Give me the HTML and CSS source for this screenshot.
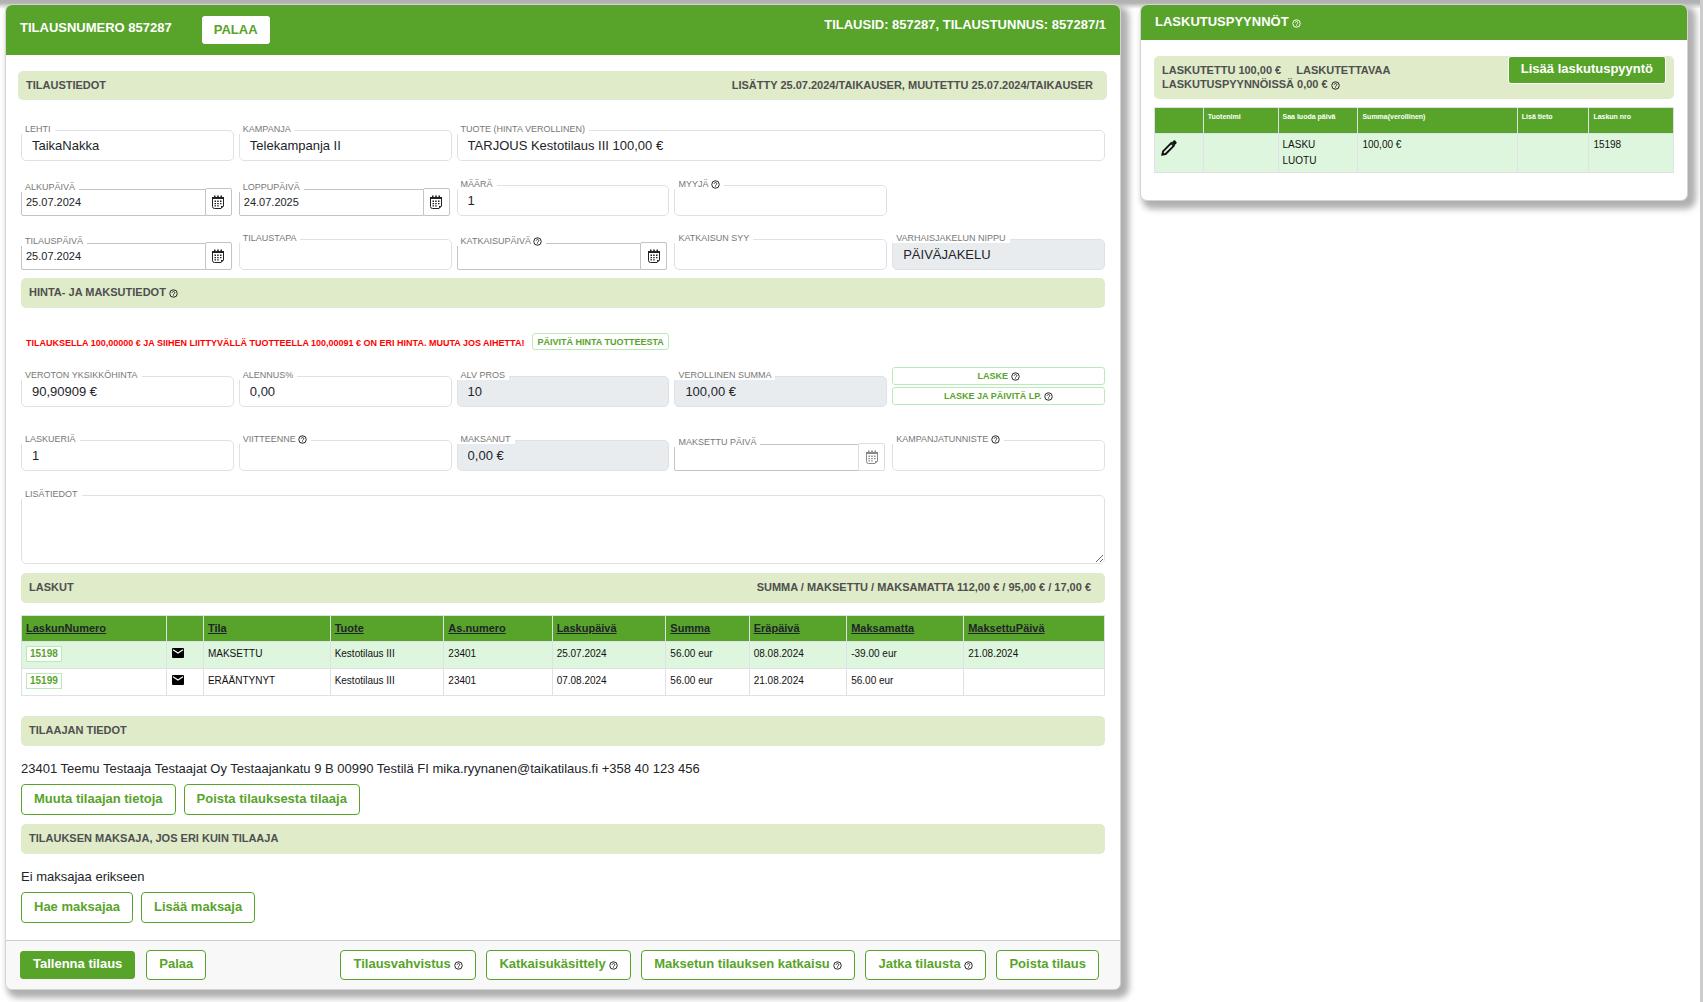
FILE: index.html
```html
<!DOCTYPE html>
<html lang="fi">
<head>
<meta charset="utf-8">
<title>Tilaus 857287</title>
<link rel="stylesheet" href="styles.css">
</head>
<body>
<svg class="sprite" aria-hidden="true">
  <symbol id="i-help" viewBox="0 0 24 24"><circle cx="12" cy="12" r="10" fill="none" stroke="currentColor" stroke-width="2.6"/><path d="M8.6 10a3.4 3.4 0 1 1 5.4 2.6c-1.300.9-2 1.500-2 2.800M12 17v2" fill="none" stroke="currentColor" stroke-width="2.400"/></symbol>
  <symbol id="i-cal" viewBox="0 0 12 14"><path d="M.5 3v8.500a2 2 0 0 0 2 2H9l2.500-2.500V3z" fill="none" stroke="currentColor"/><path d="M0 2h12v2H0zM2 .5h1.500V2H2zM5.200.5h1.600V2H5.200zM8.500.5H10V2H8.500z" fill="currentColor"/><path d="M2.500 5.500H4V7H2.500zM5.200 5.500h1.500V7H5.200zM8 5.500h1.500V7H8zM2.500 8H4v1.200H2.500zM5.200 8h1.500v1.200H5.200zM8 8h1.500v1.200H8zM2.500 10.300H4v1.200H2.500zM5.200 10.300h1.500v1.200H5.200zM9 13.500V11h2.500z" fill="currentColor"/></symbol>
  <symbol id="i-mail" viewBox="0 0 12 10"><path d="M1 0h10a1 1 0 0 1 1 1v8a1 1 0 0 1-1 1H1a1 1 0 0 1-1-1V1a1 1 0 0 1 1-1z" fill="#000"/><path d="M1 1.800 6 5l5-3.200" fill="none" stroke="#fff" stroke-width="1.200"/></symbol>
  <symbol id="i-pen" viewBox="0 0 16 16"><path d="M1.400 14.600 2 11.400l8.200-8.200 2.600 2.600-8.200 8.200z" fill="none" stroke="currentColor" stroke-width="1.900"/><path d="m10.800 2.400 1.800-1.800q.8-.6 1.500 0l1.300 1.300q.6.700 0 1.500l-1.800 1.800zM.6 15.400l.8-3.400L4 14.600z" fill="currentColor"/></symbol>
</svg>
<div class="page">
  <main class="panel">
    <header class="head head-main">
      <h1>TILAUSNUMERO <strong>857287</strong></h1>
      <button class="btn-head" type="button">PALAA</button>
      <span class="ids">TILAUSID: 857287, TILAUSTUNNUS: 857287/1</span>
    </header>
    <div class="intro">
      <div class="bar"><h2>TILAUSTIEDOT</h2><span>LISÄTTY 25.07.2024/TAIKAUSER, MUUTETTU 25.07.2024/TAIKAUSER</span></div>
    </div>
    <form class="body">
      <div class="grid row-first">
        <div class="field"><label for="lehti">LEHTI</label><input id="lehti" value="TaikaNakka"></div>
        <div class="field"><label for="kampanja">KAMPANJA</label><input id="kampanja" value="Telekampanja II"></div>
        <div class="field wide"><label for="tuote">TUOTE (HINTA VEROLLINEN)</label><input id="tuote" value="TARJOUS Kestotilaus III 100,00 €"></div>
      </div>
      <div class="grid row-second">
        <div class="field date"><label for="alku">ALKUPÄIVÄ</label><input id="alku" value="25.07.2024"><button type="button" aria-label="Kalenteri"><svg><use href="#i-cal"/></svg></button></div>
        <div class="field date"><label for="loppu">LOPPUPÄIVÄ</label><input id="loppu" value="24.07.2025"><button type="button" aria-label="Kalenteri"><svg><use href="#i-cal"/></svg></button></div>
        <div class="field"><label for="maara">MÄÄRÄ</label><input id="maara" value="1"></div>
        <div class="field"><label for="myyja">MYYJÄ <svg class="help"><use href="#i-help"/></svg></label><input id="myyja"></div>
      </div>
      <div class="grid row-third">
        <div class="field date"><label for="tilauspv">TILAUSPÄIVÄ</label><input id="tilauspv" value="25.07.2024"><button type="button" aria-label="Kalenteri"><svg><use href="#i-cal"/></svg></button></div>
        <div class="field"><label for="tapa">TILAUSTAPA</label><input id="tapa"></div>
        <div class="field date"><label for="katkpv">KATKAISUPÄIVÄ <svg class="help"><use href="#i-help"/></svg></label><input id="katkpv"><button type="button" aria-label="Kalenteri"><svg><use href="#i-cal"/></svg></button></div>
        <div class="field"><label for="syy">KATKAISUN SYY</label><input id="syy"></div>
        <div class="field"><label for="nippu">VARHAISJAKELUN NIPPU</label><input id="nippu" value="PÄIVÄJAKELU" readonly></div>
      </div>
      <div class="bar bar-price"><h2>HINTA- JA MAKSUTIEDOT <svg class="help"><use href="#i-help"/></svg></h2></div>
      <div class="warning"><span>TILAUKSELLA 100,00000 € JA SIIHEN LIITTYVÄLLÄ TUOTTEELLA 100,00091 € ON ERI HINTA. MUUTA JOS AIHETTA!</span><button class="btn-mini" type="button">PÄIVITÄ HINTA TUOTTEESTA</button></div>
      <div class="grid row-price">
        <div class="field"><label for="hinta">VEROTON YKSIKKÖHINTA</label><input id="hinta" value="90,90909 €"></div>
        <div class="field"><label for="ale">ALENNUS%</label><input id="ale" value="0,00"></div>
        <div class="field"><label for="alv">ALV PROS</label><input id="alv" value="10" readonly></div>
        <div class="field"><label for="summa">VEROLLINEN SUMMA</label><input id="summa" value="100,00 €" readonly></div>
        <div class="calc"><button class="btn-mini" type="button">LASKE <svg class="help"><use href="#i-help"/></svg></button><button class="btn-mini" type="button">LASKE JA PÄIVITÄ LP. <svg class="help"><use href="#i-help"/></svg></button></div>
      </div>
      <div class="grid row-pay">
        <div class="field"><label for="erat">LASKUERIÄ</label><input id="erat" value="1"></div>
        <div class="field"><label for="viite">VIITTEENNE <svg class="help"><use href="#i-help"/></svg></label><input id="viite"></div>
        <div class="field"><label for="maksanut">MAKSANUT</label><input id="maksanut" value="0,00 €" readonly></div>
        <div class="field date"><label for="makspv">MAKSETTU PÄIVÄ</label><input id="makspv"><button type="button" aria-label="Kalenteri" disabled><svg><use href="#i-cal"/></svg></button></div>
        <div class="field"><label for="tunniste">KAMPANJATUNNISTE <svg class="help"><use href="#i-help"/></svg></label><input id="tunniste"></div>
      </div>
      <div class="field notes"><label for="lisa">LISÄTIEDOT</label><textarea id="lisa"></textarea></div>

      <div class="bar"><h2>LASKUT</h2><span>SUMMA / MAKSETTU / MAKSAMATTA 112,00 € / 95,00 € / 17,00 €</span></div>
      <table class="invoices">
        <colgroup><col class="c-no"><col class="c-mail"><col class="c-state"><col class="c-prod"><col class="c-cust"><col class="c-date"><col class="c-sum"><col class="c-due"><col class="c-open"><col class="c-paid"></colgroup>
        <thead><tr><th><a href="#">LaskunNumero</a></th><th></th><th><a href="#">Tila</a></th><th><a href="#">Tuote</a></th><th><a href="#">As.numero</a></th><th><a href="#">Laskupäivä</a></th><th><a href="#">Summa</a></th><th><a href="#">Eräpäivä</a></th><th><a href="#">Maksamatta</a></th><th><a href="#">MaksettuPäivä</a></th></tr></thead>
        <tbody>
          <tr><td><a class="number" href="#">15198</a></td><td><svg class="mail"><use href="#i-mail"/></svg></td><td>MAKSETTU</td><td>Kestotilaus III</td><td>23401</td><td>25.07.2024</td><td>56.00 eur</td><td>08.08.2024</td><td>-39.00 eur</td><td>21.08.2024</td></tr>
          <tr><td><a class="number" href="#">15199</a></td><td><svg class="mail"><use href="#i-mail"/></svg></td><td>ERÄÄNTYNYT</td><td>Kestotilaus III</td><td>23401</td><td>07.08.2024</td><td>56.00 eur</td><td>21.08.2024</td><td>56.00 eur</td><td></td></tr>
        </tbody>
      </table>

      <div class="bar"><h2>TILAAJAN TIEDOT</h2></div>
      <p>23401 Teemu Testaaja Testaajat Oy Testaajankatu 9 B 00990 Testilä FI mika.ryynanen@taikatilaus.fi +358 40 123 456</p>
      <div class="actions"><button class="btn" type="button">Muuta tilaajan tietoja</button><button class="btn" type="button">Poista tilauksesta tilaaja</button></div>
      <div class="bar bar-payer"><h2>TILAUKSEN MAKSAJA, JOS ERI KUIN TILAAJA</h2></div>
      <p>Ei maksajaa erikseen</p>
      <div class="actions"><button class="btn" type="button">Hae maksajaa</button><button class="btn" type="button">Lisää maksaja</button></div>
    </form>
    <footer class="foot">
      <button class="btn btn-solid" type="button">Tallenna tilaus</button>
      <button class="btn" type="button">Palaa</button>
      <div class="foot-right">
        <button class="btn" type="button">Tilausvahvistus <svg class="help"><use href="#i-help"/></svg></button>
        <button class="btn" type="button">Katkaisukäsittely <svg class="help"><use href="#i-help"/></svg></button>
        <button class="btn" type="button">Maksetun tilauksen katkaisu <svg class="help"><use href="#i-help"/></svg></button>
        <button class="btn" type="button">Jatka tilausta <svg class="help"><use href="#i-help"/></svg></button>
        <button class="btn" type="button">Poista tilaus</button>
      </div>
    </footer>
  </main>

  <aside class="panel">
    <header class="head"><h1>LASKUTUSPYYNNÖT <svg class="help"><use href="#i-help"/></svg></h1></header>
    <div class="side-body">
      <div class="bar bar-side"><p>LASKUTETTU 100,00 € <span class="due">LASKUTETTAVAA</span> LASKUTUSPYYNNÖISSÄ 0,00 € <svg class="help"><use href="#i-help"/></svg></p><button class="btn btn-solid" type="button">Lisää laskutuspyyntö</button></div>
      <table class="requests">
        <colgroup><col class="r-edit"><col class="r-name"><col class="r-when"><col class="r-sum"><col class="r-info"><col class="r-no"></colgroup>
        <thead><tr><th></th><th>Tuotenimi</th><th>Saa luoda päivä</th><th>Summa(verollinen)</th><th>Lisä tieto</th><th>Laskun nro</th></tr></thead>
        <tbody><tr><td><svg class="pen"><use href="#i-pen"/></svg></td><td></td><td>LASKU<br>LUOTU</td><td>100,00 €</td><td></td><td>15198</td></tr></tbody>
      </table>
    </div>
  </aside>
</div>
</body>
</html>
```
FILE: styles.css
```css
* { box-sizing: border-box; }
body {
  margin: 0;
  font: 13px/20px "Liberation Sans", Arial, sans-serif;
  color: #212529;
  background: #fff;
}
.sprite { position: absolute; width: 0; height: 0; }
h1, h2, p { margin: 0; }
button, input, textarea { font: inherit; color: inherit; }
.help { width: 9px; height: 9px; vertical-align: -2px; color: #222; }

.page {
  display: grid;
  grid-template-columns: 1114fr 546fr;
  gap: 21px;
  align-items: start;
  min-height: 100vh;
  padding: 5px 13px 14px 6px;
  border-right: 3px solid #ccc;
  background: linear-gradient(#b0b0b0, #b4b4b4 3px, #fff 9px);
  overflow: hidden;
}
.panel {
  background: #fff;
  border-radius: 6px;
  box-shadow: 0 0 0 1px #d4d4d4, 5px 5px 6px 4px #b0b0b0;
  overflow: hidden;
}

.head {
  display: flex;
  align-items: flex-start;
  padding: 7px 14px 8px;
  background: #58a42b;
  color: #fff;
}
.head h1 { font-size: 13px; line-height: 20px; font-weight: 700; }
.head .help { color: #fff; }
.head-main { padding: 11px 14px; }
.head-main h1 { padding-top: 2px; margin-right: 30px; }
.ids { margin-left: auto; line-height: 18px; font-weight: 700; }
.btn-head {
  height: 28px;
  padding: 0 12px;
  border: 0;
  border-radius: 3px;
  background: #fff;
  color: #58a42b;
  font-weight: 700;
}

.bar {
  display: flex;
  justify-content: space-between;
  min-height: 30px;
  padding: 5px 14px 5px 8px;
  border-radius: 5px;
  background: #dfebc9;
  color: #4f4f4f;
  font-size: 11px;
  line-height: 18px;
  font-weight: 700;
}
.bar h2 { font: inherit; }
.intro { padding: 16px 13px 0 12px; }
.intro .bar { min-height: 29px; }

.body { padding: 30px 15px 17px; }
.grid {
  display: grid;
  grid-template-columns: repeat(5, 1fr);
  gap: 5px;
  align-items: end;
}
.wide { grid-column: span 3; }
.row-second { margin-top: 24px; }
.row-third { margin-top: 23px; }
.field { position: relative; display: flex; }
.field label {
  position: absolute;
  left: 0;
  top: -6px;
  padding: 0 4px;
  background: #fff;
  color: #777;
  font-size: 9px;
  line-height: 10px;
}
.field input, .field textarea {
  width: 100%;
  min-width: 0;
  height: 31px;
  padding: 0 10px 1px;
  border: 1px solid #dee2e6;
  border-radius: 5px;
  background: #fff;
}
.field input[readonly] { background: #e9ecef; }
.field textarea { display: block; height: 69px; padding: 8px 10px; }
.date { padding-right: 2px; align-items: flex-end; }
.date input {
  height: 27px;
  padding: 0 4px 1px;
  border-color: #c4c4c4;
  border-radius: 2px 0 0 2px;
  font-size: 11px;
}
.date button {
  display: grid;
  place-items: center;
  flex: 0 0 27px;
  height: 28px;
  margin-left: -1px;
  padding: 0;
  border: 1px solid #c4c4c4;
  border-radius: 2px;
  background: #fff;
  color: #222;
}
.date button:disabled { color: #888; border-color: #ddd; }
.date button svg { width: 12px; height: 14px; }

.bar-price { margin-top: 8px; }
.warning {
  display: flex;
  align-items: flex-start;
  gap: 8px;
  margin: 25px 0 16px 5px;
  color: #f00;
  font-size: 9px;
  line-height: 16px;
  font-weight: 700;
}
.warning span { padding-top: 2px; }
.btn-mini {
  padding: 0 4px;
  height: 17px;
  border: 1px solid #b9ebb9;
  border-radius: 3px;
  background: #fff;
  color: #58a42b;
  font-size: 9px;
  line-height: 14px;
  font-weight: 700;
}
.calc { display: grid; gap: 2px; padding-bottom: 2px; }
.calc .btn-mini { height: 18px; }
.row-pay { margin-top: 33px; }
.notes { margin: 24px 0 9px; }

table { width: 100%; table-layout: fixed; border-collapse: collapse; color: #111; }
th, td { border: 1px solid #dee2e6; text-align: left; vertical-align: top; }
th { background: #58a42b; }
.invoices { margin: 12px 0 20px; font-size: 10px; line-height: 16px; }
.invoices th { height: 26px; padding: 4px; font-size: 11px; }
.invoices th a { color: #212529; }
.invoices td { height: 27px; padding: 4px; }
tbody tr:nth-child(odd) { background: #ddf6dd; }
.c-no { width: 13.400%; } .c-mail { width: 3.400%; } .c-state { width: 11.700%; }
.c-prod { width: 10.500%; } .c-cust { width: 10%; } .c-date { width: 10.500%; }
.c-sum { width: 7.700%; } .c-due { width: 9%; } .c-open { width: 10.800%; }
.number {
  display: inline-block;
  padding: 0 3px;
  border: 1px solid #b9ebb9;
  background: #fff;
  color: #58a42b;
  font-weight: 700;
  line-height: 14px;
  text-decoration: none;
}
.mail { width: 12px; height: 10px; margin-left: 1px; vertical-align: -1px; }

.body p { padding-top: 13px; }
.actions { display: flex; gap: 8px; margin-top: 5px; }
.btn {
  height: 31px;
  padding: 0 12px 2px;
  border: 1px solid #58a42b;
  border-radius: 4px;
  background: #fff;
  color: #58a42b;
  font-weight: 700;
}
.btn-solid { height: 28px; background: #58a42b; color: #fff; border-radius: 3px; }
.bar-payer { margin-top: 9px; }

.foot {
  display: flex;
  align-items: center;
  gap: 11px;
  min-height: 49px;
  padding: 0 21px 0 14px;
  border-top: 1px solid #ccc;
  background: #f8f8f8;
}
.foot .btn:not(.btn-solid) { height: 30px; }
.foot-right { display: flex; gap: 10px; margin-left: auto; }

.side-body { padding: 16px 13px 27px; }
.bar-side { min-height: 43px; padding: 0 8px; line-height: 14px; }
.bar-side p { padding-top: 7px; max-width: 260px; }
.due { margin-left: 12px; }
.bar-side .btn { flex: none; border-color: #fff; font-size: 13px; }
.requests { margin-top: 8px; font-size: 10px; line-height: 16px; }
.requests th { height: 26px; padding: 1px 4px; color: #fff; font-size: 7px; }
.requests td { height: 39px; padding: 3px 4px; }
.r-edit { width: 9.400%; } .r-name { width: 14.400%; } .r-when { width: 15.400%; }
.r-sum { width: 30.700%; } .r-info { width: 13.800%; }
.pen { width: 16px; height: 16px; margin: 3px 2px; }
```
